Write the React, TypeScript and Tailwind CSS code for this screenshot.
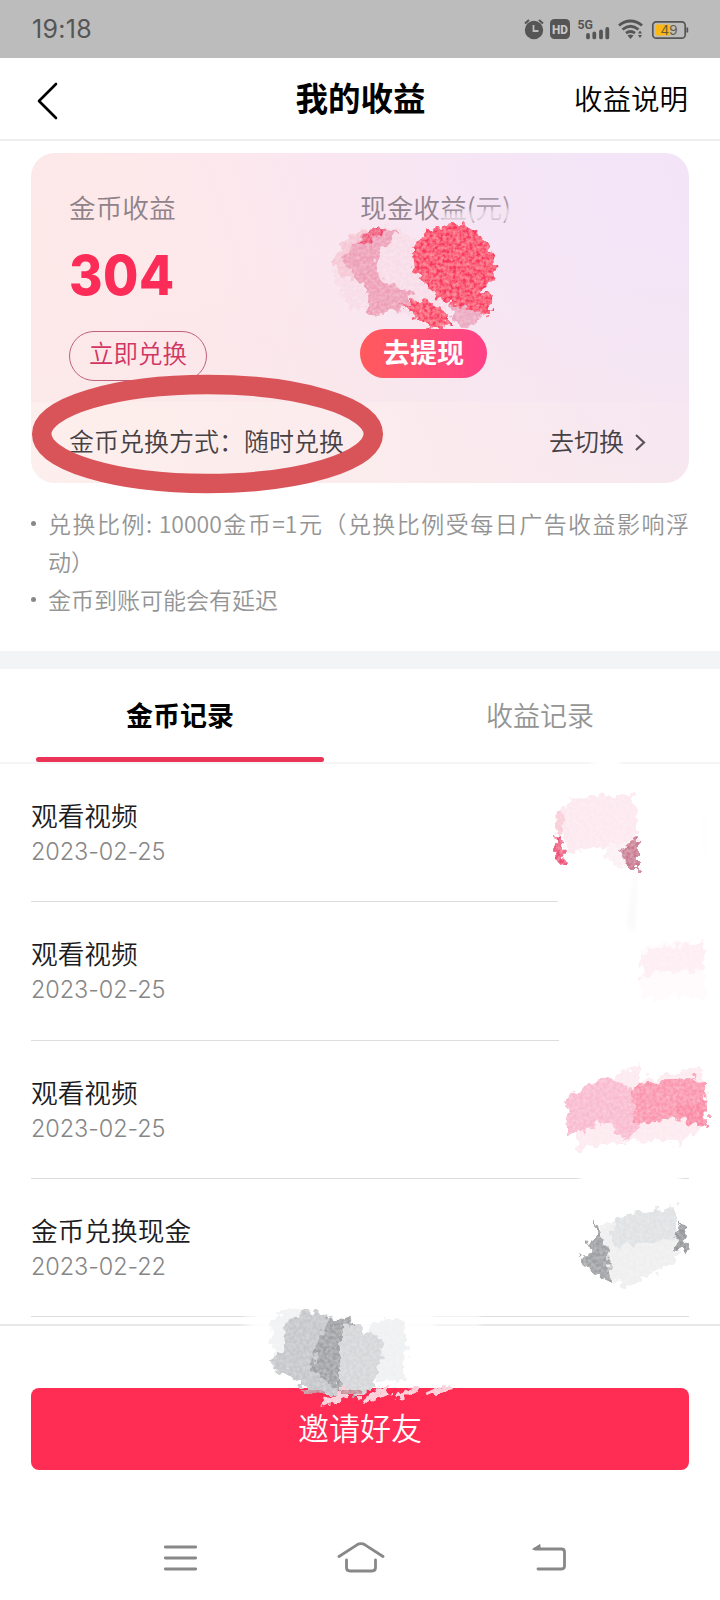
import { useState } from 'react';
import clsx from 'clsx';

type CoinRecord = {
  id: number;
  title: string;
  date: string;
  lineClass: string;
};

const records: CoinRecord[] = [
  { id: 1, title: '观看视频', date: '2023-02-25', lineClass: 'w-[527px]' },
  { id: 2, title: '观看视频', date: '2023-02-25', lineClass: 'w-[528px]' },
  { id: 3, title: '观看视频', date: '2023-02-25', lineClass: 'w-[658px]' },
  { id: 4, title: '金币兑换现金', date: '2023-02-22', lineClass: 'w-[658px]' },
];

const tabs = ['金币记录', '收益记录'];

function StatusBar() {
  return (
    <div className="flex h-[58px] shrink-0 items-center justify-between bg-[#bcbcbc] pl-8 pr-[31px] text-[#555]">
      <span className="pt-0.5 font-['Inter'] text-[25px] tracking-[0.3px]">19:18</span>
      <svg width="166" height="24" viewBox="523 17 166 24" fill="none">
        {/* alarm */}
        <circle cx="534" cy="30" r="9.2" fill="#555" />
        <path d="M525 23.5l4-3.6M543 23.5l-4-3.6" stroke="#555" strokeWidth="2" />
        <path d="M533.5 25v6h5" stroke="#bcbcbc" strokeWidth="1.8" />
        {/* hd */}
        <rect x="550" y="19" width="20" height="20" rx="4.5" fill="#555" />
        <text x="560" y="33.8" textAnchor="middle" fill="#c8c8c8" fontSize="13" fontWeight="800" fontFamily="Roboto" textLength="16" lengthAdjust="spacingAndGlyphs">HD</text>
        {/* signal */}
        <text x="577.5" y="29" fill="#555" fontSize="13.5" fontWeight="700" fontFamily="Roboto" textLength="15.5" lengthAdjust="spacingAndGlyphs">5G</text>
        <path d="M588 35v2.4M594.3 33.5v3.9M601 31.5v5.9M607.3 29v8.4" stroke="#555" strokeWidth="3.8" strokeLinecap="round" />
        {/* wifi */}
        <path d="M619 25.5c7-6 16-6 23 0M622.5 29.5c5-4 11-4 16 0M626 33.2c3-2.2 6-2.2 9 0" stroke="#555" strokeWidth="2.8" />
        <path d="M627.5 35.5q3-1.8 6 0L630.5 39z" fill="#555" />
        <path d="M638 33.5l2-3 2 3zM638 35l2 3 2-3z" fill="#555" />
        {/* battery */}
        <rect x="652.8" y="21.8" width="32.4" height="16.4" rx="3.5" stroke="#555" strokeWidth="1.7" />
        <path d="M656 24.5h14v11h-14z" fill="#fdb813" />
        <path d="M687.3 27.5v5" stroke="#555" strokeWidth="1.8" />
        <text x="669" y="35" textAnchor="middle" fill="#6b5a3a" fontSize="13.5" fontFamily="Inter">49</text>
      </svg>
    </div>
  );
}

function Header() {
  return (
    <header className="flex h-[83px] shrink-0 items-center border-b-2 border-[#ededed] px-[31px] text-black">
      <div className="flex flex-1 pl-1.5 pt-1">
        <svg width="22" height="38" viewBox="0 0 22 38" fill="none" stroke="#000" strokeWidth="2.6" strokeLinecap="round" strokeLinejoin="round">
          <path d="M19 2L2 19L19 36" />
        </svg>
      </div>
      <h1 className="pr-[4px] pb-[4px] text-[32.5px] leading-[48px] font-bold">我的收益</h1>
      <div className="flex-1 pr-px pb-0.5 text-right text-[28.5px] leading-[48px] font-[350]">收益说明</div>
    </header>
  );
}

function EarningsCard() {
  return (
    <section className="mx-[31px] mt-3 flex h-[330px] flex-col overflow-hidden rounded-[24px] bg-[linear-gradient(180deg,rgba(252,232,230,0)_30%,rgba(248,232,234,0.6)_100%),linear-gradient(72deg,#fee9e8_0%,#fde8eb_32%,#f9e6f1_55%,#f4e5f7_82%,#f3e4f7_100%)]">
      <div className="flex h-[249px] pl-[38px] pt-[35px]">
        <div className="flex w-[291px] flex-col items-start">
          <span className="text-[26.7px] leading-[38px] font-[350] text-[#8f8288]">金币收益</span>
          <strong className="mt-[16px] origin-left scale-x-[0.93] font-['Inter'] text-[55px] leading-[66px] font-extrabold tracking-[0.5px] text-[#fb2c58]">304</strong>
          <button className="mt-[23px] h-[50px] w-[138px] rounded-full border-[1.5px] border-[#c0607e] pb-1.5 text-[24.5px] leading-[42px] font-[350] text-[#d13662]">立即兑换</button>
        </div>
        <div className="flex flex-col items-start">
          <span className="text-[26.7px] leading-[38px] font-[350] text-[#8f828d]">现金收益(元)</span>
          <button className="mt-[103px] h-[49px] w-[127px] rounded-full bg-linear-to-r from-[#ff5a5c] to-[#ff4187] pb-1 text-[27px] leading-[45px] font-bold text-white">去提现</button>
        </div>
      </div>
      <div className="flex flex-1 items-center justify-between bg-linear-to-r from-[#fff5f0]/50 to-[#fff3f2]/10 pr-[42px] pb-[3px] pl-[38px] text-[25px] font-[350] text-[#454043]">
        <span>金币兑换方式：随时兑换</span>
        <span className="flex items-center gap-2.5">
          去切换
          <svg width="13" height="20" viewBox="0 0 13 20" fill="none" stroke="#5a5458" strokeWidth="2.2">
            <path d="M2 4l8 7.5-8 7.5" />
          </svg>
        </span>
      </div>
    </section>
  );
}

function Notes() {
  return (
    <ul className="flex h-[168px] flex-col pt-[21px] pr-[31px] pl-[31px] text-[23px] leading-[38px] font-[350] text-[#949494]">
      <li className="flex">
        <span className="mt-[17px] mr-3 size-[5px] shrink-0 rounded-full bg-[#888]" />
        <p className="flex-1">
          <span className="block text-justify [text-align-last:justify]">兑换比例: 10000金币=1元（兑换比例受每日广告收益影响浮</span>
          动）
        </p>
      </li>
      <li className="flex">
        <span className="mt-[17px] mr-3 size-[5px] shrink-0 rounded-full bg-[#888]" />
        <p>金币到账可能会有延迟</p>
      </li>
    </ul>
  );
}

// Brush strokes that hide the amounts, plus the red ring round the exchange mode
function Annotations() {
  return (
    <svg className="pointer-events-none absolute inset-0" width="720" height="1600" viewBox="0 0 720 1600" fill="none">
      <defs>
        <filter id="brush" x="-10%" y="-10%" width="120%" height="120%">
          <feTurbulence type="fractalNoise" baseFrequency="0.13" numOctaves="2" seed="4" result="n" />
          <feDisplacementMap in="SourceGraphic" in2="n" scale="15" xChannelSelector="R" yChannelSelector="G" result="d" />
          <feTurbulence type="fractalNoise" baseFrequency="0.3" numOctaves="2" seed="8" result="g" />
          <feColorMatrix in="g" values="0 0 0 0 1  0 0 0 0 1  0 0 0 0 1  0.5 0 0 0 -0.15" result="w" />
          <feComposite in="w" in2="d" operator="in" result="grain" />
          <feMerge>
            <feMergeNode in="d" />
            <feMergeNode in="grain" />
          </feMerge>
        </filter>
        <filter id="soft">
          <feGaussianBlur stdDeviation="2" />
        </filter>
      </defs>

      {/* cash amount */}
      <path d="M442 213l76-6v14l-78 2z" fill="#f6e5f3" opacity="0.75" filter="url(#soft)" />
      <path d="M474 196h42v24h-42z" fill="#f5e5f4" opacity="0.25" filter="url(#soft)" />
      <g filter="url(#brush)">
        <path d="M337 252l42-27 22 4 30 18 20 50-12 25-40-9-52-6-14-30z" fill="#f8dce7" />
        <path d="M333 262l10-20 22-14 4 20-16 34-8-5z" fill="#f6c6d4" />
        <path d="M343 262l10-20 24-14 20 4-20 26 2 21 35 14-12 16-34 8 0-26z" fill="#ee9db7" />
        <path d="M355 246l22-22 10 5-18 12z" fill="#f04872" />
        <path d="M412 250l14-17 27-11 22 6 18 25 2 24-14 14 12 7-6 16-28 4-11-16-10-3-10-14-14-14z" fill="#fa3660" />
        <path d="M401 303l21-4 28 15 0 9-20 5z" fill="#fa3c64" />
        <path d="M450 306l32 6-7 14-18-1z" fill="#eba6c0" />
      </g>

      {/* first row */}
      <path d="M562 790h150v60h-150zM560 880h140v30h-140zM592 756h28v10h-28z" fill="#fff" filter="url(#soft)" />
      <path d="M635 868l2-1-2 66-8-8zM704 812h1v42h-1z" fill="#f9f9fa" filter="url(#soft)" />
      <g filter="url(#brush)">
        <path d="M562 806l12-8 60-3 4 46-18 8-8-4-16 5-30 3z" fill="#fde8f0" />
        <path d="M610 845l20-5-2 29-10-1-13-14z" fill="#fcf1f4" />
        <path d="M556 813l8-2 1 22-7 1z" fill="#f9ccd7" />
        <path d="M554 833l6 1 5 30-7 1z" fill="#ef4f79" />
        <path d="M626 844l13-6v32h-13l-5-18z" fill="#ca7890" />
      </g>

      {/* second row */}
      <g filter="url(#brush)">
        <path d="M642 950l24-8 37 1 3 54-63 3z" fill="#fffafc" />
        <path d="M641 956l28-10 34-3 2 27-40 1-25 8z" fill="#feeef4" />
      </g>

      {/* third row */}
      <path d="M580 1170h100v14H580z" fill="#fff" filter="url(#soft)" />
      <g filter="url(#brush)">
        <path d="M572 1125l48-54 20-6 0 15 46-10 16-6 2 60-24 20-30-4-50 4-20 6z" fill="#fdeaf0" />
        <path d="M566 1099l24-14 22-7 24 12 1 42-12 8-20-19-22 10-16 4z" fill="#f9bacf" />
        <path d="M632 1090l10-8 30-1 20-3 14 6 1 40-8 3-18-8-46 5z" fill="#fb94ae" />
        <path d="M673 1105l33-6-1 30-18-7z" fill="#fb85a2" />
      </g>

      {/* fourth row */}
      <g filter="url(#brush)">
        <path d="M601 1225l8-4 67 4 2 34-50 29-22-9z" fill="#efeff0" />
        <path d="M612 1225l20-13 43-5 2 33-65 6z" fill="#dfe1e3" />
        <path d="M595 1220l13 29 1 32-19-10-13-15 13-1-2-15 7 2z" fill="#9d9fa2" />
        <path d="M680 1222l8 12-2 18-12-3z" fill="#94969a" />
      </g>

      {/* above the invite button */}
      <path d="M254 1313h180v16H252z" fill="#fff" opacity="0.9" filter="url(#soft)" />
      <path d="M246 1313h234v15H242z" fill="#fff" opacity="0.6" filter="url(#soft)" />
      <g filter="url(#brush)">
        <path d="M270 1319l20-9 42 7v65l-48-9-12-20z" fill="#f1f2f3" />
        <path d="M369 1323l32-4 5 17-1 44-39 2z" fill="#eff1f2" />
        <path d="M285 1323l24-13 22 7 8 78-25-2-40-25-4-9 14-9z" fill="#c4c6c9" />
        <path d="M328 1321l22-3 9 23-2 58-37-20-7-10 3-24z" fill="#9ea0a3" />
        <path d="M340 1325l15-1 26 15 2 9-11 40-12 9-20-8z" fill="#d4d6d8" />
      </g>
      <g filter="url(#brush)" stroke="#fbcad5" strokeWidth="6">
        <path d="M322 1405l26-16M331 1401l14-7M362 1401l26-12M397 1397l23-9M424 1395l27-8" />
      </g>
      <path d="M304 1391l22 1M342 1393l22 0" stroke="#c38994" strokeWidth="6" filter="url(#brush)" />

      <ellipse cx="207.5" cy="434" rx="165.8" ry="49.5" stroke="#d95459" strokeWidth="19.5" />
    </svg>
  );
}

function NavBar() {
  return (
    <nav className="flex h-[130px] items-center justify-between pt-[45px] pr-[153px] pl-[163px]">
      <svg width="35" height="32" viewBox="0 0 35 32" stroke="#888" strokeWidth="2.8" strokeLinecap="round">
        <path d="M2.3 5h30.4M2.3 16h30.4M2.3 27h30.4" />
      </svg>
      <svg className="mr-2" width="50" height="32" viewBox="0 0 50 32" fill="none" stroke="#888" strokeWidth="2.8" strokeLinecap="round" strokeLinejoin="round">
        <path d="M3 14.5L21 2.8q4-2.4 8 0L47 14.5M10.5 18v7.5q0 3.5 3.5 3.5h22q3.5 0 3.5-3.5V18" />
      </svg>
      <svg width="36" height="32" viewBox="0 0 36 32" fill="none" stroke="#888" strokeWidth="2.8" strokeLinecap="round" strokeLinejoin="round">
        <path d="M4 7h26.5q3 0 3 3v14q0 3-3 3H7" />
        <path d="M2 7l7-4.5V7z" fill="#888" strokeWidth="1" />
      </svg>
    </nav>
  );
}

export default function App() {
  const [activeTab, setActiveTab] = useState(0);

  return (
    <div className="relative flex h-[1600px] w-[720px] flex-col overflow-hidden bg-white font-['Noto_Sans_CJK_SC',sans-serif]">
      <StatusBar />
      <Header />
      <EarningsCard />
      <Notes />
      <div className="h-[18px] shrink-0 bg-[#f3f4f6]" />

      <div className="flex h-[95px] shrink-0 border-b-2 border-[#f5f5f6]">
        {tabs.map((tab, i) => (
          <button
            key={tab}
            onClick={() => setActiveTab(i)}
            className={clsx(
              'flex flex-1 flex-col items-center justify-between pt-[26px] text-[27px] leading-[40px]',
              i === activeTab ? 'font-bold text-black' : 'font-[350] text-[#949494]',
            )}
          >
            {tab}
            {i === activeTab && <span className="h-[5px] w-[288px] rounded-full bg-[#ea3558]" />}
          </button>
        ))}
      </div>

      <main className="h-[562px] shrink-0 overflow-hidden border-b-2 border-[#e8e8e8] px-[31px]">
        {records.map(record => (
          <div key={record.id} className="flex h-[138.3px] flex-col pt-[32px]">
            <span className="text-[26.7px] leading-[38px] font-[350] text-[#1c1c22]">{record.title}</span>
            <span className="mt-0.5 font-['Inter'] text-[23.5px] leading-8 font-light tracking-[-0.1px] text-[#868686]">{record.date}</span>
            <span className={clsx('mt-auto h-px bg-[#dedede]', record.lineClass)} />
          </div>
        ))}
      </main>

      <footer className="px-[31px] pt-[62px]">
        <button className="h-[82px] w-full rounded-lg bg-[#ff2c54] pb-1 text-[31px] leading-[78px] font-[350] text-white">邀请好友</button>
      </footer>
      <NavBar />
      <Annotations />
    </div>
  );
}
